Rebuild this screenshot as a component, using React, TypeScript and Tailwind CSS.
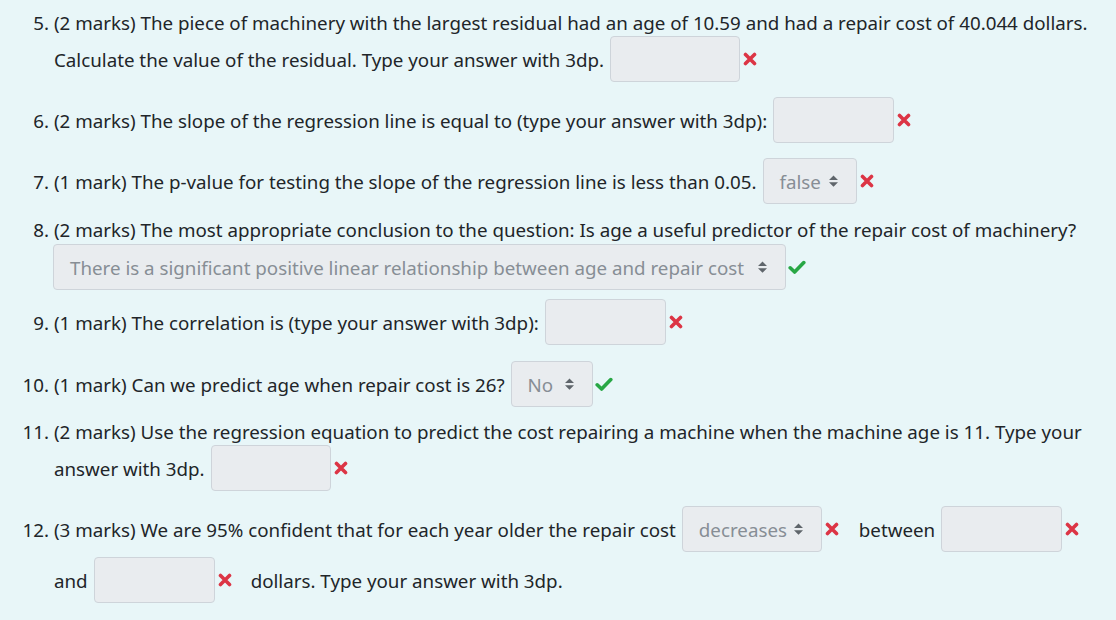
const Wrong = () => (
  <svg width="14" height="14" viewBox="0 0 14 14" className="ml-[3px] shrink-0">
    <path d="M2.5 2.5L11.5 11.5M11.5 2.5L2.5 11.5" stroke="#dc3545" strokeWidth="3.6" strokeLinecap="round" />
  </svg>
);

const Right = () => (
  <svg width="18" height="15" viewBox="0 0 18 15" className="ml-[2px] shrink-0">
    <path d="M2.2 7.8L6.6 12L15.8 2.6" fill="none" stroke="#28a745" strokeWidth="3.6" strokeLinecap="round" strokeLinejoin="round" />
  </svg>
);

const Box = ({ w }: { w: string }) => (
  <span className={`inline-block h-[46px] ${w} ml-[6px] rounded-[4px] border border-[#ced4da] bg-[#e9ecef] shrink-0`} />
);

const Sel = ({ w, label }: { w: string; label: string }) => (
  <span
    className={`flex items-center justify-between h-[46px] ${w} ml-[6px] pl-[16px] pr-[18px] rounded-[4px] border border-[#ced4da] bg-[#e9ecef] text-[#878e95] shrink-0`}
  >
    <span>{label}</span>
    <svg width="9" height="12" viewBox="0 0 4 5">
      <path fill="#5f656b" d="M2 0L0 2h4zm0 5L0 3h4z" />
    </svg>
  </span>
);

const Num = ({ n }: { n: string }) => <span className="w-[49px] text-right shrink-0 mr-[5px]">{n}</span>;

export default function App() {
  return (
    <div
      className="min-h-screen bg-[#e8f6f8] text-[#212529] text-[18.75px] leading-[27px] pt-[9px]"
      style={{ fontFamily: '"Noto Sans", sans-serif' }}
    >
      {/* 5 */}
      <div className="flex h-[27px]">
        <Num n="5." />
        <span className="whitespace-nowrap">(2 marks) The piece of machinery with the largest residual had an age of 10.59 and had a repair cost of 40.044 dollars.</span>
      </div>
      <div className="flex items-center h-[46px] pl-[54px]">
        <span>Calculate the value of the residual. Type your answer with 3dp.</span>
        <Box w="w-[130px]" />
        <Wrong />
      </div>

      {/* 6 */}
      <div className="flex items-center h-[46px] mt-[15px]">
        <Num n="6." />
        <span>(2 marks) The slope of the regression line is equal to (type your answer with 3dp):</span>
        <Box w="w-[121px]" />
        <Wrong />
      </div>

      {/* 7 */}
      <div className="flex items-center h-[46px] mt-[15px]">
        <Num n="7." />
        <span>(1 mark) The p-value for testing the slope of the regression line is less than 0.05.</span>
        <Sel w="w-[94px]" label="false" />
        <Wrong />
      </div>

      {/* 8 */}
      <div className="flex h-[27px] mt-[12px]">
        <Num n="8." />
        <span className="whitespace-nowrap">(2 marks) The most appropriate conclusion to the question: Is age a useful predictor of the repair cost of machinery?</span>
      </div>
      <div className="flex items-center h-[46px] pl-[47px] mt-[1px]">
        <Sel w="w-[733px]" label="There is a significant positive linear relationship between age and repair cost" />
        <Right />
      </div>

      {/* 9 */}
      <div className="flex items-center h-[46px] mt-[9px]">
        <Num n="9." />
        <span>(1 mark) The correlation is (type your answer with 3dp):</span>
        <Box w="w-[121px]" />
        <Wrong />
      </div>

      {/* 10 */}
      <div className="flex items-center h-[46px] mt-[16px]">
        <Num n="10." />
        <span>(1 mark) Can we predict age when repair cost is 26?</span>
        <Sel w="w-[82px]" label="No" />
        <Right />
      </div>

      {/* 11 */}
      <div className="flex h-[27px] mt-[11px]">
        <Num n="11." />
        <span className="whitespace-nowrap">(2 marks) Use the regression equation to predict the cost repairing a machine when the machine age is 11. Type your</span>
      </div>
      <div className="flex items-center h-[46px] pl-[54px]">
        <span>answer with 3dp.</span>
        <Box w="w-[120px]" />
        <Wrong />
      </div>

      {/* 12 */}
      <div className="flex items-center h-[46px] mt-[15px]">
        <Num n="12." />
        <span className="whitespace-nowrap">(3 marks) We are 95% confident that for each year older the repair cost</span>
        <Sel w="w-[140px]" label="decreases" />
        <Wrong />
        <span className="ml-[20px]">between</span>
        <Box w="w-[121px]" />
        <Wrong />
      </div>
      <div className="flex items-center h-[46px] pl-[54px] mt-[5px]">
        <span>and</span>
        <Box w="w-[121px]" />
        <Wrong />
        <span className="ml-[19px]">dollars. Type your answer with 3dp.</span>
      </div>
    </div>
  );
}
